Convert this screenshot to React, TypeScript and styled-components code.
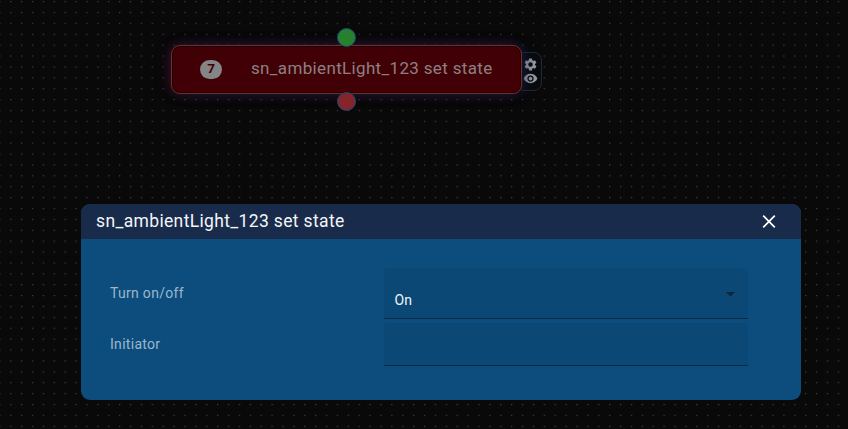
import React from "react";
import styled, { createGlobalStyle } from "styled-components";

const GlobalStyle = createGlobalStyle`
  *, *::before, *::after { box-sizing: border-box; }
  body { margin: 0; background: #090909; overflow: hidden; }
  #root { font-family: Roboto, "Liberation Sans", sans-serif; }
`;

const Canvas = styled.main`
  position: relative;
  width: 848px;
  height: 429px;
  overflow: hidden;
  background: #090909;
`;

const DotGrid = styled.svg`
  position: absolute;
  inset: 0;
  width: 100%;
  height: 100%;
`;

const FlowNode = styled.section`
  position: absolute;
  left: 171px;
  top: 45px;
  width: 351px;
  height: 49px;
`;

const NodeBody = styled.div`
  position: relative;
  display: flex;
  align-items: center;
  height: 100%;
  padding: 0 0 2px 28px;
  border: 1px solid #7e2a24;
  border-radius: 9px;
  background: #410006;
  box-shadow: inset 0 0 0 1px #190205, -4px 0 13px rgba(90, 20, 50, 0.32),
    4px 0 13px rgba(15, 40, 90, 0.38), 0 0 12px rgba(50, 28, 75, 0.25);
`;

const Badge = styled.span`
  display: flex;
  align-items: center;
  justify-content: center;
  width: 22px;
  height: 19px;
  margin-top: 2px;
  padding-bottom: 2px;
  border-radius: 10px;
  background: #858585;
  color: #410006;
  font-size: 13.5px;
  font-weight: 700;
  line-height: 17px;
`;

const NodeLabel = styled.span`
  margin: -2px 0 0 29px;
  color: #8c8082;
  font-size: 17px;
  line-height: 24px;
  letter-spacing: 0.34px;
  white-space: nowrap;
`;

const Port = styled.i<{ $color: string; $top: number }>`
  position: absolute;
  left: 166px;
  top: ${(p) => p.$top}px;
  width: 19px;
  height: 19px;
  border: 1px solid #1c4873;
  border-radius: 50%;
  background: ${(p) => p.$color};
`;

const NodeTools = styled.div`
  position: absolute;
  left: 345px;
  top: 7px;
  display: flex;
  flex-direction: column;
  align-items: center;
  width: 26px;
  height: 39px;
  padding: 4px 0 0 3px;
  border: 1px solid #25282b;
  border-radius: 8px;
  background: #080b10;
  color: #9a9b9c;

  svg { display: block; flex: none; fill: currentColor; }
  svg + svg { margin-top: -1px; }
`;

const Dialog = styled.section`
  position: absolute;
  left: 81px;
  top: 204px;
  width: 720px;
  height: 196px;
  border-radius: 9px;
  overflow: hidden;
  background: #0d4d7d;
`;

const DialogHeader = styled.header`
  display: flex;
  align-items: center;
  justify-content: space-between;
  height: 35px;
  padding: 0 25px 1px 15px;
  background: #192b4b;
  color: #f4f6f9;
`;

const DialogTitle = styled.h1`
  margin: 0;
  font-size: 17.5px;
  font-weight: 400;
  line-height: 24px;
  letter-spacing: 0.35px;
`;

const CloseButton = styled.button`
  display: flex;
  padding: 0;
  border: 0;
  background: none;
  color: #fff;

  svg { display: block; }
`;

const Form = styled.div`
  display: grid;
  grid-template-columns: 274px 364px;
  grid-template-rows: 51px 43px;
  row-gap: 4px;
  padding: 29px 0 0 29px;
`;

const FieldLabel = styled.span`
  align-self: center;
  padding-bottom: 2px;
  color: #9bb7cd;
  font-size: 14px;
  line-height: 20px;
  letter-spacing: 0.3px;
`;

const Field = styled.div`
  display: flex;
  justify-content: space-between;
  border-bottom: 1px solid #0b2a43;
  border-radius: 4px 4px 0 0;
  background: #0c4876;
`;

const FieldValue = styled.span`
  padding: 22px 0 0 10.5px;
  color: #f1f5f8;
  font-size: 14px;
  line-height: 20px;
`;

const Caret = styled.svg`
  width: 9px;
  height: 5px;
  margin: 24px 13px 0 0;
  fill: #0a263d;
`;

export default function App() {
  return (
    <>
      <GlobalStyle />
      <Canvas>
        <DotGrid>
          <defs>
            <pattern id="dots" x="-0.8" y="1" width="10.89" height="10.89" patternUnits="userSpaceOnUse">
              <rect width="1.3" height="1.2" fill="#404040" />
            </pattern>
          </defs>
          <rect width="100%" height="100%" fill="url(#dots)" />
        </DotGrid>

        <FlowNode>
          <NodeTools>
            <svg width="15" height="15" viewBox="0 0 24 24">
              <path d="M19.14 12.94c.04-.3.06-.61.06-.94s-.02-.64-.07-.94l2.03-1.58a.49.49 0 0 0 .12-.61l-1.92-3.32a.49.49 0 0 0-.59-.22l-2.39.96a7 7 0 0 0-1.62-.94l-.36-2.54a.48.48 0 0 0-.48-.41h-3.84a.48.48 0 0 0-.47.41l-.36 2.54c-.59.24-1.13.57-1.62.94l-2.39-.96a.48.48 0 0 0-.59.22L2.74 8.87a.48.48 0 0 0 .12.61l2.03 1.58a6 6 0 0 0 0 1.88l-2.03 1.58a.49.49 0 0 0-.12.61l1.92 3.32c.12.22.37.29.59.22l2.39-.96c.5.38 1.03.7 1.62.94l.36 2.54c.05.24.24.41.48.41h3.84c.24 0 .44-.17.47-.41l.36-2.54c.59-.24 1.13-.56 1.62-.94l2.39.96c.22.08.47 0 .59-.22l1.92-3.32a.48.48 0 0 0-.12-.61zM12 15.6a3.6 3.6 0 1 1 0-7.2 3.6 3.6 0 0 1 0 7.2z" />
            </svg>
            <svg width="15" height="15" viewBox="0 0 24 24">
              <path d="M12 4.5C7 4.5 2.73 7.61 1 12c1.73 4.39 6 7.5 11 7.5s9.27-3.11 11-7.5c-1.73-4.39-6-7.5-11-7.5zM12 17a5 5 0 1 1 0-10 5 5 0 0 1 0 10zm0-8a3 3 0 1 0 0 6 3 3 0 0 0 0-6z" />
            </svg>
          </NodeTools>
          <NodeBody>
            <Badge>7</Badge>
            <NodeLabel>sn_ambientLight_123 set state</NodeLabel>
          </NodeBody>
          <Port $color="#26812f" $top={-17.5} />
          <Port $color="#84252b" $top={47} />
        </FlowNode>

        <Dialog role="dialog">
          <DialogHeader>
            <DialogTitle>sn_ambientLight_123 set state</DialogTitle>
            <CloseButton aria-label="Close">
              <svg width="14" height="14" viewBox="0 0 14 14" fill="none" stroke="currentColor" strokeWidth="1.7">
                <path d="M1.2 1.7 12.8 13.3M12.8 1.7 1.2 13.3" />
              </svg>
            </CloseButton>
          </DialogHeader>
          <Form>
            <FieldLabel>Turn on/off</FieldLabel>
            <Field>
              <FieldValue>On</FieldValue>
              <Caret viewBox="0 0 9 5"><path d="M0 0h9L4.5 4.5z" /></Caret>
            </Field>
            <FieldLabel>Initiator</FieldLabel>
            <Field />
          </Form>
        </Dialog>
      </Canvas>
    </>
  );
}
